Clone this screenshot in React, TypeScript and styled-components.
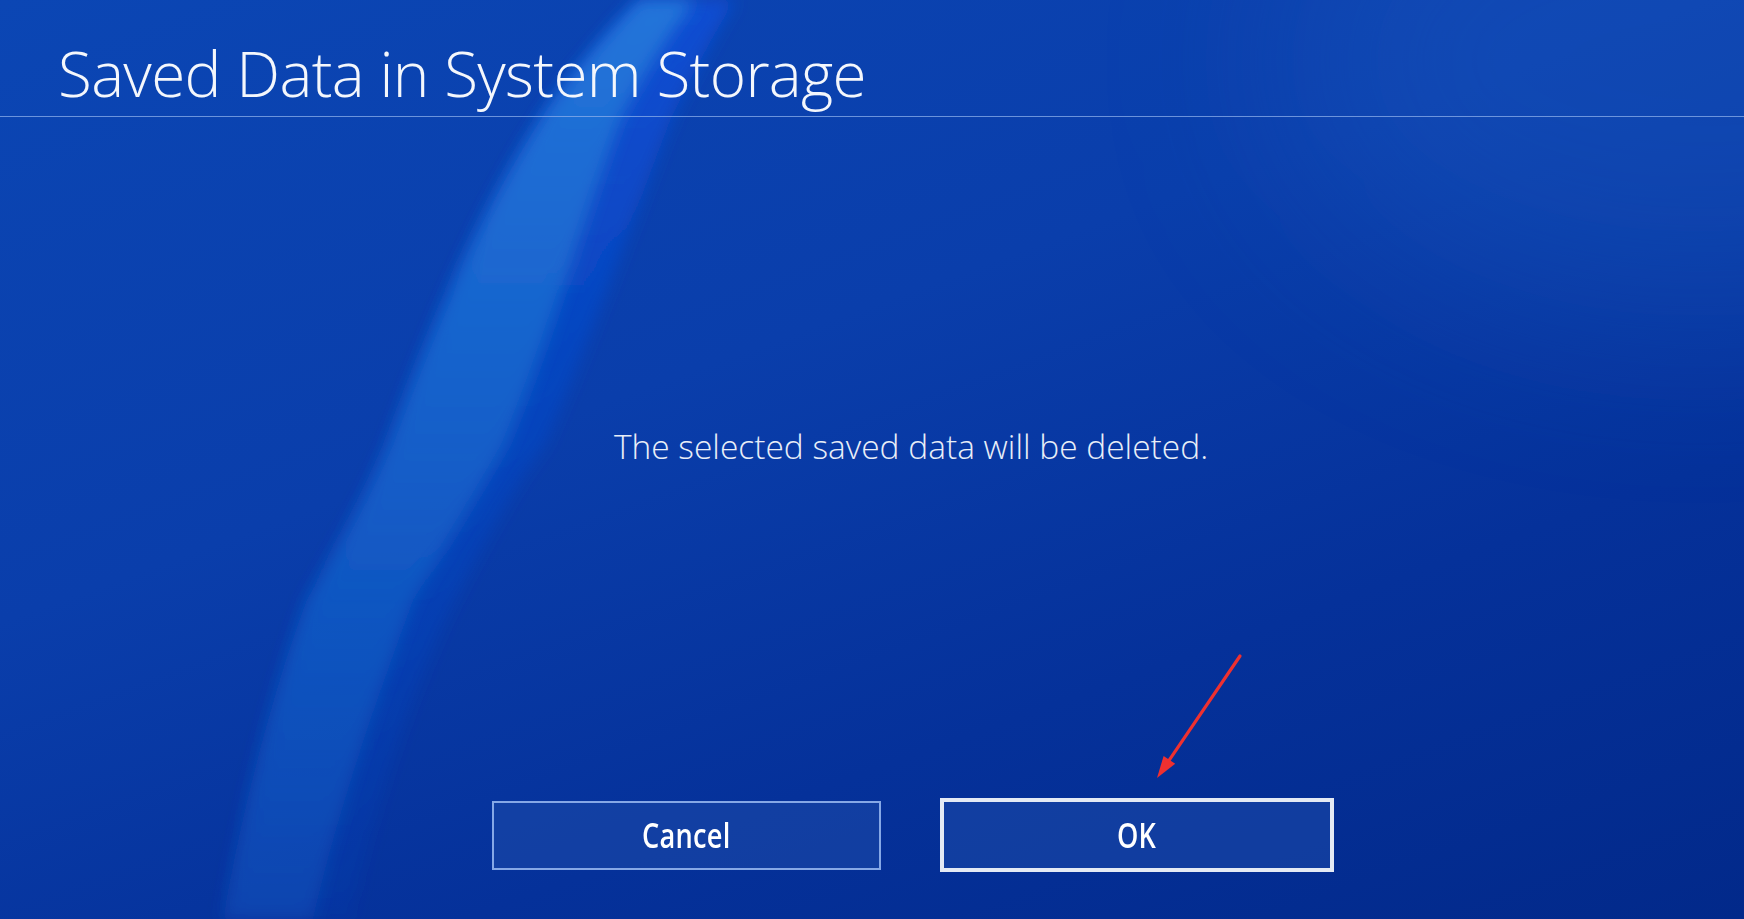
import styled, { createGlobalStyle } from 'styled-components';

const GlobalStyle = createGlobalStyle`
  html, body {
    margin: 0;
    padding: 0;
    height: 100%;
  }
  body {
    font-family: 'Open Sans', 'Liberation Sans', sans-serif;
    background: #0839a6;
  }
`;

export default function App(): JSX.Element {
  return (
    <>
      <GlobalStyle />
      <StyledScreen>
        <Wallpaper />
        <StyledHeader>
          <StyledTitle>Saved Data in System Storage</StyledTitle>
        </StyledHeader>
        <StyledBody>
          <StyledMessage>The selected saved data will be deleted.</StyledMessage>
          <StyledButtonRow>
            <StyledButton type="button">
              <StyledLabel>Cancel</StyledLabel>
            </StyledButton>
            <StyledButton type="button" $focused>
              <StyledLabel>OK</StyledLabel>
            </StyledButton>
          </StyledButtonRow>
        </StyledBody>
        <PointerArrow />
      </StyledScreen>
    </>
  );
}

function Wallpaper(): JSX.Element {
  return (
    <StyledWallpaper viewBox="0 0 1744 919" preserveAspectRatio="none">
      <defs>
        <filter id="soft" x="-20%" y="-20%" width="140%" height="140%">
          <feGaussianBlur stdDeviation="8" />
        </filter>
        <filter id="haze" x="-50%" y="-50%" width="200%" height="200%">
          <feGaussianBlur stdDeviation="90" />
        </filter>
        <linearGradient id="band" x1="0" y1="0" x2="0" y2="1">
          <stop offset="0" stopColor="#2377da" stopOpacity="0.95" />
          <stop offset="0.5" stopColor="#1866cc" stopOpacity="0.75" />
          <stop offset="1" stopColor="#1459c2" stopOpacity="0.4" />
        </linearGradient>
        <linearGradient id="edge" x1="0" y1="0" x2="0" y2="1">
          <stop offset="0" stopColor="#0a4fd8" stopOpacity="0.85" />
          <stop offset="1" stopColor="#0a44c0" stopOpacity="0.15" />
        </linearGradient>
      </defs>
      <ellipse cx="1700" cy="60" rx="420" ry="260" fill="#1f5cc4" opacity="0.35" filter="url(#haze)" />
      <path
        d="M 640 0 C 600 40 560 90 541 119 C 470 230 420 360 388 445 C 360 510 330 560 307 600 C 270 700 240 820 223 919 L 350 919 C 375 800 415 680 455 600 C 495 520 525 470 545 445 C 590 340 640 200 671 119 C 690 80 710 40 735 0 Z"
        fill="url(#edge)"
        filter="url(#soft)"
      />
      <path
        d="M 640 0 C 600 40 560 90 541 119 C 470 230 420 360 388 445 C 360 510 330 560 307 600 C 270 700 240 820 223 919 L 313 919 C 340 800 380 690 413 600 C 450 540 480 490 506 445 C 550 340 590 200 621 119 C 640 80 665 40 695 0 Z"
        fill="url(#band)"
        filter="url(#soft)"
      />
    </StyledWallpaper>
  );
}

function PointerArrow(): JSX.Element {
  return (
    <StyledArrow viewBox="0 0 100 135" width="100" height="135">
      <line x1="90" y1="6" x2="19.4" y2="109.8" stroke="#ee3030" strokeWidth="3.2" strokeLinecap="round" />
      <polygon points="7,128 25.2,113.7 13.6,105.9" fill="#ee3030" />
    </StyledArrow>
  );
}

const StyledScreen = styled.main`
  position: relative;
  display: flex;
  flex-direction: column;
  height: 100vh;
  overflow: hidden;
  background: linear-gradient(160deg, #0b46b4 0%, #0a3eab 40%, #05319a 70%, #02298a 100%);
  color: #ffffff;
`;

const StyledWallpaper = styled.svg`
  position: absolute;
  inset: 0;
  width: 100%;
  height: 100%;
  pointer-events: none;
`;

const StyledHeader = styled.header`
  position: relative;
  display: flex;
  align-items: flex-end;
  height: 117px;
  box-sizing: border-box;
  padding: 0 0 12px 58px;
  border-bottom: 1px solid rgba(140, 175, 235, 0.75);
`;

const StyledTitle = styled.h1`
  margin: 0;
  font-family: 'Open Sans', 'Liberation Sans', sans-serif;
  font-weight: 300;
  font-size: 62px;
  line-height: 62px;
  letter-spacing: -0.65px;
  color: #f4f7fc;
`;

const StyledBody = styled.section`
  position: relative;
  flex: 1;
  display: flex;
  flex-direction: column;
  align-items: center;
  padding: 0 0 47px 82px;
`;

const StyledMessage = styled.p`
  margin: 312px 4px 0 0;
  font-family: 'Open Sans', 'Liberation Sans', sans-serif;
  font-weight: 300;
  font-size: 33.5px;
  line-height: 34px;
  color: #e8eef8;
`;

const StyledButtonRow = styled.div`
  display: flex;
  align-items: center;
  gap: 59px;
  margin-top: auto;
`;

const StyledButton = styled.button<{ $focused?: boolean }>`
  display: flex;
  align-items: center;
  justify-content: center;
  box-sizing: border-box;
  width: ${({ $focused }) => ($focused ? '394px' : '389px')};
  height: ${({ $focused }) => ($focused ? '74px' : '69px')};
  padding: 0;
  border: ${({ $focused }) => ($focused ? '4px solid #e4eaf4' : '2px solid #86a8e6')};
  background: rgba(30, 75, 170, 0.55);
  cursor: pointer;
`;

const StyledLabel = styled.span`
  display: inline-block;
  transform: scaleX(0.8);
  font-family: 'Open Sans', 'Liberation Sans', sans-serif;
  font-weight: 600;
  font-size: 34px;
  line-height: 34px;
  letter-spacing: 0.3px;
  color: #ffffff;
`;

const StyledArrow = styled.svg`
  position: absolute;
  left: 1150px;
  top: 650px;
  pointer-events: none;
`;
